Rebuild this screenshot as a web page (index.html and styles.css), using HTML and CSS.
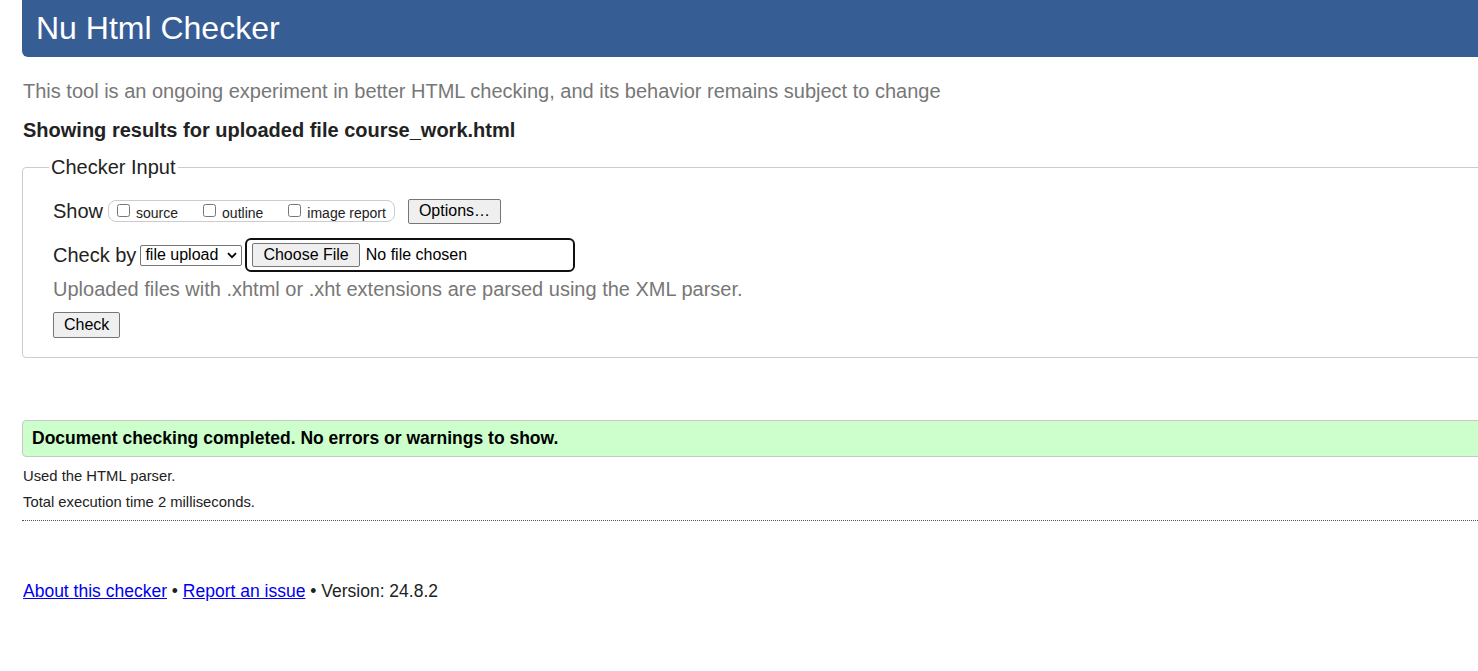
FILE: index.html
```html
<!DOCTYPE html>
<html lang="en">
<head>
<meta charset="utf-8">
<title>Nu Html Checker</title>
<link rel="stylesheet" href="styles.css">
</head>
<body>
<div class="page">
  <h1 class="title">Nu Html Checker</h1>
  <p class="about">This tool is an ongoing experiment in better HTML checking, and its behavior remains subject to change</p>
  <p class="results-for">Showing results for uploaded file course_work.html</p>

  <fieldset class="checker">
    <legend class="legend">Checker Input</legend>
    <div class="row row-show">
      <span class="label">Show</span>
      <span class="group">
        <label class="opt"><input type="checkbox" class="cb"><span>source</span></label>
        <label class="opt"><input type="checkbox" class="cb"><span>outline</span></label>
        <label class="opt"><input type="checkbox" class="cb"><span>image report</span></label>
      </span>
      <button class="btn btn-options" type="button">Options…</button>
    </div>
    <div class="row row-check">
      <span class="label">Check by</span>
      <span class="select">file upload<svg class="chev" width="10" height="7" viewBox="0 0 10 7"><path d="M1 1.2 L5 5.2 L9 1.2" fill="none" stroke="#000" stroke-width="1.8"/></svg></span>
      <span class="file">
        <button class="btn btn-choose" type="button">Choose File</button>
        <span class="file-name">No file chosen</span>
      </span>
    </div>
    <p class="hint">Uploaded files with .xhtml or .xht extensions are parsed using the XML parser.</p>
    <button class="btn btn-check" type="submit">Check</button>
  </fieldset>

  <p class="success">Document checking completed. No errors or warnings to show.</p>
  <p class="details">Used the HTML parser.</p>
  <p class="details">Total execution time 2 milliseconds.</p>
  <div class="rule"></div>

  <p class="footer"><a href="#">About this checker</a> • <a href="#">Report an issue</a> • Version: 24.8.2</p>
</div>
</body>
</html>
```

FILE: styles.css
```css
html, body {
  margin: 0;
  padding: 0;
  overflow: hidden;
  background: #fff;
}
body {
  font-family: "Liberation Sans", Arial, sans-serif;
  color: #222;
}
.page {
  margin-left: 22px;
  width: 1500px;
}
.title {
  margin: 0;
  padding: 10px 14px;
  font-size: 32px;
  line-height: 37px;
  font-weight: normal;
  color: #fff;
  background: #375d95;
  border-radius: 0 0 0 6px;
}
.about {
  margin: 23px 0 0 1px;
  font-size: 20px;
  line-height: 23px;
  color: #777;
}
.results-for {
  margin: 16px 0 0 1px;
  font-size: 20px;
  line-height: 23px;
  font-weight: bold;
  color: #222;
}
.checker {
  margin: 14px 0 0 0;
  padding: 19px 30px 19px;
  border: 1px solid #ccc;
  border-radius: 4px;
}
.legend {
  margin-left: -4px;
  padding: 0 2px;
  font-size: 20px;
  line-height: 23px;
  color: #222;
}
.row {
  display: flex;
  align-items: center;
}
.row-show {
  height: 26px;
}
.row-check {
  margin-top: 14px;
  height: 34px;
}
.label {
  font-size: 20px;
  line-height: 23px;
  color: #222;
}
.group {
  display: inline-flex;
  align-items: center;
  height: 20px;
  margin-left: 5px;
  padding: 0 8px 0 8px;
  border: 1px solid #ccc;
  border-radius: 8px;
  gap: 25px;
}
.opt {
  display: inline-flex;
  align-items: center;
  font-size: 14px;
  line-height: 16px;
  color: #222;
}
.opt span {
  margin-top: 4px;
}
.cb {
  width: 13px;
  height: 13px;
  margin: -2px 6px 0 0;
}
.btn {
  font-family: "Liberation Sans", Arial, sans-serif;
  font-size: 16px;
  line-height: 18px;
  color: #000;
  background: #efefef;
  border: 1px solid #767676;
  border-radius: 2px;
  padding: 0 10px;
  height: 25px;
}
.btn-options {
  margin-left: 13px;
}
.select {
  display: inline-flex;
  align-items: center;
  margin-left: 4px;
  height: 21px;
  width: 102px;
  box-sizing: border-box;
  padding: 0 4px;
  border: 1px solid #767676;
  border-radius: 2px;
  font-size: 16px;
  color: #000;
  justify-content: space-between;
}
.chev {
  display: block;
}
.file {
  display: inline-flex;
  align-items: center;
  margin-left: 3px;
  width: 330px;
  height: 34px;
  box-sizing: border-box;
  padding: 0 5px;
  border: 2px solid #101010;
  border-radius: 6px;
}
.btn-choose {
  height: 24px;
}
.file-name {
  margin-left: 6px;
  font-size: 16px;
  color: #000;
}
.hint {
  margin: 6px 0 0 0;
  font-size: 20px;
  line-height: 23px;
  color: #777;
}
.btn-check {
  display: block;
  margin-top: 11px;
  height: 26px;
}
.success {
  margin: 62px 0 0 0;
  padding: 7px 9px;
  font-size: 17.5px;
  line-height: 21px;
  font-weight: bold;
  color: #000;
  background: #ccffcc;
  border: 1px solid #c8c8c8;
  border-radius: 4px 0 0 4px;
}
.details {
  margin: 11px 0 0 1px;
  font-size: 14.8px;
  line-height: 17px;
  color: #222;
}
.details + .details {
  margin-top: 9px;
}
.rule {
  margin-top: 9px;
  border-top: 1px dotted #555;
}
.footer {
  margin: 60px 0 0 1px;
  font-size: 17.5px;
  line-height: 20px;
  color: #222;
}
.footer a {
  color: #0000ee;
}
```
